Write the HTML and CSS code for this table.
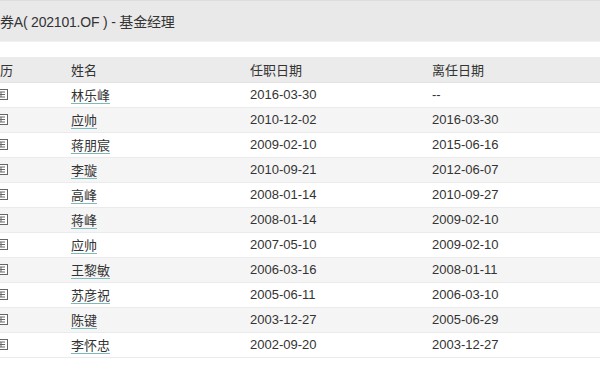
FILE: index.html
```html
<!DOCTYPE html>
<html lang="zh">
<head>
<meta charset="utf-8">
<link rel="stylesheet" href="styles.css">
</head>
<body>
<div class="page">
  <div class="titlebar"><span class="title">券A( 202101.OF ) - 基金经理</span></div>
  <div class="tablewrap">
    <table class="mgr">
      <thead>
        <tr><th class="c1">历</th><th class="c2">姓名</th><th class="c3">任职日期</th><th class="c4">离任日期</th></tr>
      </thead>
      <tbody>
        <tr><td class="c1"><svg class="ico" viewBox="0 0 14 11" width="14" height="11"><rect x="0.5" y="0.5" width="13" height="10" fill="#fff" stroke="#666"/><path d="M3 3h8M3 5.5h8M3 8h8M7 3v5" stroke="#666" fill="none"/></svg></td><td class="c2"><a class="nm">林乐峰</a></td><td class="c3">2016-03-30</td><td class="c4">--</td></tr>
        <tr><td class="c1"><svg class="ico" viewBox="0 0 14 11" width="14" height="11"><rect x="0.5" y="0.5" width="13" height="10" fill="#fff" stroke="#666"/><path d="M3 3h8M3 5.5h8M3 8h8M7 3v5" stroke="#666" fill="none"/></svg></td><td class="c2"><a class="nm">应帅</a></td><td class="c3">2010-12-02</td><td class="c4">2016-03-30</td></tr>
        <tr><td class="c1"><svg class="ico" viewBox="0 0 14 11" width="14" height="11"><rect x="0.5" y="0.5" width="13" height="10" fill="#fff" stroke="#666"/><path d="M3 3h8M3 5.5h8M3 8h8M7 3v5" stroke="#666" fill="none"/></svg></td><td class="c2"><a class="nm">蒋朋宸</a></td><td class="c3">2009-02-10</td><td class="c4">2015-06-16</td></tr>
        <tr><td class="c1"><svg class="ico" viewBox="0 0 14 11" width="14" height="11"><rect x="0.5" y="0.5" width="13" height="10" fill="#fff" stroke="#666"/><path d="M3 3h8M3 5.5h8M3 8h8M7 3v5" stroke="#666" fill="none"/></svg></td><td class="c2"><a class="nm">李璇</a></td><td class="c3">2010-09-21</td><td class="c4">2012-06-07</td></tr>
        <tr><td class="c1"><svg class="ico" viewBox="0 0 14 11" width="14" height="11"><rect x="0.5" y="0.5" width="13" height="10" fill="#fff" stroke="#666"/><path d="M3 3h8M3 5.5h8M3 8h8M7 3v5" stroke="#666" fill="none"/></svg></td><td class="c2"><a class="nm">高峰</a></td><td class="c3">2008-01-14</td><td class="c4">2010-09-27</td></tr>
        <tr><td class="c1"><svg class="ico" viewBox="0 0 14 11" width="14" height="11"><rect x="0.5" y="0.5" width="13" height="10" fill="#fff" stroke="#666"/><path d="M3 3h8M3 5.5h8M3 8h8M7 3v5" stroke="#666" fill="none"/></svg></td><td class="c2"><a class="nm">蒋峰</a></td><td class="c3">2008-01-14</td><td class="c4">2009-02-10</td></tr>
        <tr><td class="c1"><svg class="ico" viewBox="0 0 14 11" width="14" height="11"><rect x="0.5" y="0.5" width="13" height="10" fill="#fff" stroke="#666"/><path d="M3 3h8M3 5.5h8M3 8h8M7 3v5" stroke="#666" fill="none"/></svg></td><td class="c2"><a class="nm">应帅</a></td><td class="c3">2007-05-10</td><td class="c4">2009-02-10</td></tr>
        <tr><td class="c1"><svg class="ico" viewBox="0 0 14 11" width="14" height="11"><rect x="0.5" y="0.5" width="13" height="10" fill="#fff" stroke="#666"/><path d="M3 3h8M3 5.5h8M3 8h8M7 3v5" stroke="#666" fill="none"/></svg></td><td class="c2"><a class="nm">王黎敏</a></td><td class="c3">2006-03-16</td><td class="c4">2008-01-11</td></tr>
        <tr><td class="c1"><svg class="ico" viewBox="0 0 14 11" width="14" height="11"><rect x="0.5" y="0.5" width="13" height="10" fill="#fff" stroke="#666"/><path d="M3 3h8M3 5.5h8M3 8h8M7 3v5" stroke="#666" fill="none"/></svg></td><td class="c2"><a class="nm">苏彦祝</a></td><td class="c3">2005-06-11</td><td class="c4">2006-03-10</td></tr>
        <tr><td class="c1"><svg class="ico" viewBox="0 0 14 11" width="14" height="11"><rect x="0.5" y="0.5" width="13" height="10" fill="#fff" stroke="#666"/><path d="M3 3h8M3 5.5h8M3 8h8M7 3v5" stroke="#666" fill="none"/></svg></td><td class="c2"><a class="nm">陈键</a></td><td class="c3">2003-12-27</td><td class="c4">2005-06-29</td></tr>
        <tr><td class="c1"><svg class="ico" viewBox="0 0 14 11" width="14" height="11"><rect x="0.5" y="0.5" width="13" height="10" fill="#fff" stroke="#666"/><path d="M3 3h8M3 5.5h8M3 8h8M7 3v5" stroke="#666" fill="none"/></svg></td><td class="c2"><a class="nm">李怀忠</a></td><td class="c3">2002-09-20</td><td class="c4">2003-12-27</td></tr>
      </tbody>
    </table>
  </div>
</div>
</body>
</html>
```
FILE: styles.css
```css
html, body {
  margin: 0;
  padding: 0;
  background: #fff;
}
body {
  font-family: "Liberation Sans", Arial, "Noto Sans CJK SC", sans-serif;
  color: #333;
  overflow: hidden;
  width: 600px;
  height: 375px;
}
.page {
  width: 600px;
  overflow: hidden;
}
.titlebar {
  height: 40px;
  background: #e9e9e9;
  border-top: 1px solid #dedede;
  border-bottom: 1px solid #f1f1f1;
  display: flex;
  align-items: center;
}
.title {
  font-size: 14px;
  margin-left: 0;
  letter-spacing: -0.2px;
  white-space: nowrap;
  color: #333;
}
.tablewrap {
  margin-top: 15px;
  overflow: hidden;
  width: 600px;
}
.mgr {
  border-collapse: collapse;
  table-layout: fixed;
  width: 791px;
  margin-left: -30px;
  font-size: 13px;
  border-bottom: 1px solid #d9d9d9;
}
.mgr th, .mgr td {
  box-sizing: border-box;
  text-align: left;
  font-weight: normal;
  padding: 0 0 0 10px;
  white-space: nowrap;
  height: 25px;
  border-bottom: 1px solid #ebebeb;
  color: #333;
}
.mgr th {
  background: #ebebeb;
  border-bottom: 1px solid #e2e2e2;
}
.mgr tbody tr:nth-child(even) td {
  background: #f5f5f5;
}
.mgr .c1 { width: 91px; padding-left: 17px; }
.mgr th.c1 { padding-left: 30px; }
.mgr .c2 { width: 179px; }
.mgr .c3 { width: 182px; }
.mgr .c4 { width: 339px; }
.ico {
  display: block;
  margin-left: 7px;
}
.nm {
  color: #333;
  text-decoration: none;
  border-bottom: 1px solid #7fb9bb;
  padding-bottom: 0;
}
```
